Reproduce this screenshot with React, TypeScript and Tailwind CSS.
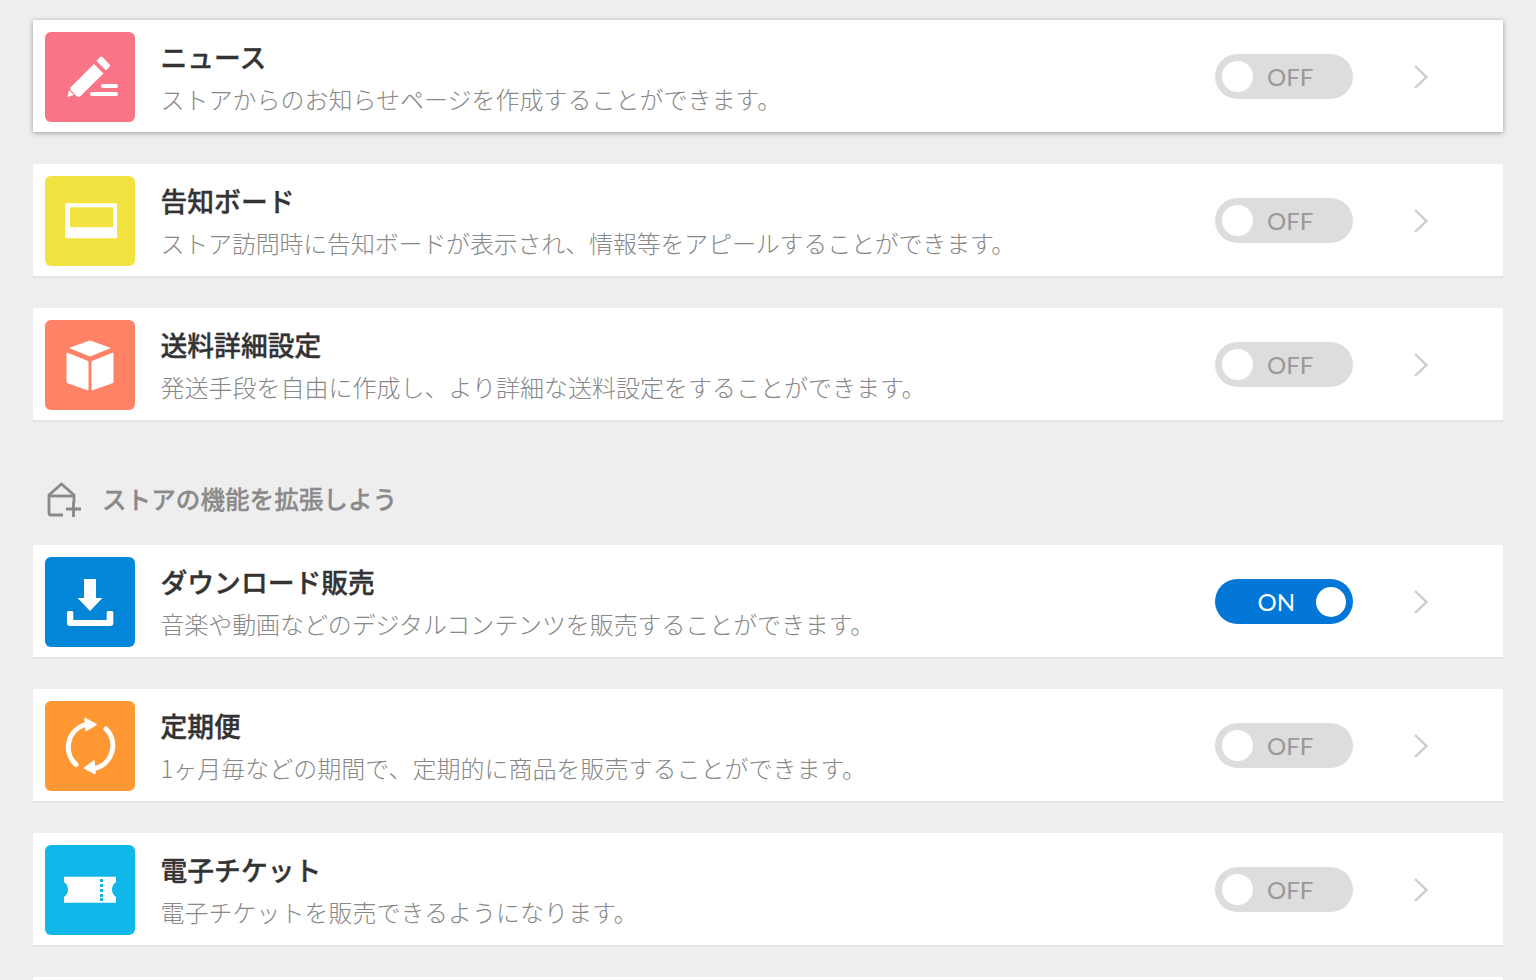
import React from "react";

const jp = "font-['Noto_Sans_CJK_JP','Noto_Sans',sans-serif]";

const Pencil = () => (
  <svg width="90" height="90" viewBox="0 0 90 90" fill="#fff">
    <path d="M22.5 65 L24 58 L29 63 Z" />
    <path d="M25.5 55.5 L49 32 L58.5 41.5 L35 64.5 Q33.5 65.5 31.5 64 L26 58.5 Q24.8 57 25.5 55.5 Z" />
    <path d="M51.5 29 L55 25.2 Q56.3 24 57.6 25.2 L64.6 32.4 Q65.6 33.6 64.6 34.7 L61 38.5 Z" />
    <rect x="56" y="52" width="17" height="4" rx="2" />
    <rect x="45" y="60" width="28" height="4" rx="2" />
  </svg>
);
const Board = () => (
  <svg width="90" height="90" viewBox="0 0 90 90">
    <path fillRule="evenodd" fill="#fff" d="M21.5 27.3 H70.5 Q72 27.3 72 28.8 V60.8 Q72 62.3 70.5 62.3 H21.5 Q20 62.3 20 60.8 V28.8 Q20 27.3 21.5 27.3 Z M26 31.3 Q25 31.3 25 32.3 V50.3 Q25 51.3 26 51.3 H67 Q68 51.3 68 50.3 V32.3 Q68 31.3 67 31.3 Z" />
  </svg>
);
const Box = () => (
  <svg width="90" height="90" viewBox="0 0 90 90" fill="#fff">
    <path d="M24 28 L44 20.8 Q45 20.5 46 20.8 L66 28 L45 36.5 Z" />
    <path d="M22 33 L43 41.5 V70 L22 62.5 Z" stroke="#fff" strokeLinejoin="round" strokeWidth="1" />
    <path d="M68 33 L47 41.5 V70 L68 62.5 Z" stroke="#fff" strokeLinejoin="round" strokeWidth="1" />
  </svg>
);
const Download = () => (
  <svg width="90" height="90" viewBox="0 0 90 90" fill="#fff">
    <path d="M39 22 H51 V41 H57.5 L45 54 L32.5 41 H39 Z" />
    <path d="M22 55.5 Q22 54 23.5 54 H26.8 Q28.3 54 28.3 55.5 V63 H61.7 V55.5 Q61.7 54 63.2 54 H66.8 Q68.3 54 68.3 55.5 V66 Q68.3 69 65.3 69 H25 Q22 69 22 66 Z" />
  </svg>
);
const Cycle = () => (
  <svg width="90" height="90" viewBox="0 0 90 90" fill="none">
    <path d="M39 24 A 23.5 23.5 0 0 0 31 63.5" stroke="#fff" strokeWidth="5" strokeLinecap="round" />
    <path d="M61 28 A 23.5 23.5 0 0 1 49 67.6" stroke="#fff" strokeWidth="5" strokeLinecap="round" />
    <path d="M40 17.5 L51 23.5 L41 29.5 Z" fill="#fff" stroke="#fff" strokeWidth="1.5" strokeLinejoin="round" />
    <path d="M49 60 L39.5 67 L50 72.5 Z" fill="#fff" stroke="#fff" strokeWidth="1.5" strokeLinejoin="round" />
  </svg>
);
const Ticket = () => (
  <svg width="90" height="90" viewBox="0 0 90 90">
    <path fill="#fff" d="M19 31.7 H71 V37 A 9 9 0 0 0 71 52 V57.7 H19 V52 A 9 9 0 0 0 19 37 Z" />
    <g fill="#0fb8e8">
      <rect x="55" y="34" width="3" height="3" />
      <rect x="55" y="39" width="3" height="3" />
      <rect x="55" y="44" width="3" height="3" />
      <rect x="55" y="49" width="3" height="3" />
      <rect x="55" y="53" width="3" height="3" />
    </g>
  </svg>
);
const HousePlus = () => (
  <svg width="35" height="36" viewBox="0 0 35 36" fill="none" stroke="#888888" strokeWidth="2.8">
    <path d="M16 33 H4 Q2 33 2 31 V13 L14.5 2 L27 13 V21" strokeLinejoin="round" />
    <path d="M2 14 H27" />
    <path d="M19 27 H34 M26.5 20 V35" />
  </svg>
);

function Toggle({ on }: { on: boolean }) {
  if (on) {
    return (
      <div className="mt-[22.3px] w-[138px] h-[45px] shrink-0 rounded-full bg-[#0277d8] flex items-center justify-end pr-[7px] gap-[21px]">
        <span className="font-['Lato',sans-serif] text-[24px] text-white">ON</span>
        <span className="w-[30px] h-[30px] rounded-full bg-white" />
      </div>
    );
  }
  return (
    <div className="mt-[22.3px] w-[138px] h-[45px] shrink-0 rounded-full bg-[#dddddd] flex items-center pl-[7px] gap-[14px]">
      <span className="w-[31px] h-[31px] rounded-full bg-white" />
      <span className="font-['Lato',sans-serif] text-[24px] text-[#999999]">OFF</span>
    </div>
  );
}

const Chevron = () => (
  <svg width="16" height="26" viewBox="0 0 16 26" fill="none" stroke="#cccccc" strokeWidth="2.4">
    <path d="M2 2 L13.5 13 L2 24" />
  </svg>
);

function Row({ color, icon, title, desc, on = false, raised = false, descClass = "" }: { color: string; icon: React.ReactNode; title: string; desc: string; on?: boolean; raised?: boolean; descClass?: string }) {
  return (
    <div className={`shrink-0 bg-white flex items-start pl-[12px] pt-[12px] ${raised ? "h-[112px] mb-[2px] shadow-[0_1px_5px_rgba(0,0,0,0.35)]" : "h-[114px] border-b-2 border-[#e4e4e4]"}`}>
      <div className={`w-[90px] h-[90px] rounded-[6px] shrink-0 ${color}`}>{icon}</div>
      <div className="ml-[25.5px] flex-1 pt-[7px]">
        <div className={`${jp} text-[26.8px] font-medium [-webkit-text-stroke:0.35px_#333333] leading-[36px] text-[#333333]`}>{title}</div>
        <div className={`${jp} text-[24px] font-light leading-[36px] mt-[6px] text-[#888888] ${descClass}`}>{desc}</div>
      </div>
      <Toggle on={on} />
      <div className="w-[150px] pl-[60px] pt-[32px] shrink-0"><Chevron /></div>
    </div>
  );
}

export default function App() {
  return (
    <div className="h-[980px] overflow-hidden bg-[#eeeeee] pt-[20px] px-[33px] flex flex-col">
      <div className="shrink-0 flex flex-col gap-[30px]">
        <Row raised color="bg-[#f97585]" icon={<Pencil />} title="ニュース" desc="ストアからのお知らせページを作成することができます。" />
        <Row color="bg-[#f3e341]" icon={<Board />} title="告知ボード" desc="ストア訪問時に告知ボードが表示され、情報等をアピールすることができます。" descClass="tracking-[-0.2px]" />
        <Row color="bg-[#ff8267]" icon={<Box />} title="送料詳細設定" desc="発送手段を自由に作成し、より詳細な送料設定をすることができます。" />
      </div>
      <div className="shrink-0 h-[123px] flex items-center pl-[14px] pt-[33px] gap-[20px]">
        <HousePlus />
        <span className={`${jp} text-[24.6px] font-medium [-webkit-text-stroke:0.3px_#8a8a8a] text-[#8a8a8a] mb-[3px]`}>ストアの機能を拡張しよう</span>
      </div>
      <div className="shrink-0 flex flex-col gap-[30px]">
        <Row on color="bg-[#0486d8]" icon={<Download />} title="ダウンロード販売" desc="音楽や動画などのデジタルコンテンツを販売することができます。" descClass="tracking-[-0.1px]" />
        <Row color="bg-[#ff9832]" icon={<Cycle />} title="定期便" desc="1ヶ月毎などの期間で、定期的に商品を販売することができます。" />
        <Row color="bg-[#0fb8e8]" icon={<Ticket />} title="電子チケット" desc="電子チケットを販売できるようになります。" />
        <div className="h-[113px] bg-white shrink-0" />
      </div>
    </div>
  );
}
